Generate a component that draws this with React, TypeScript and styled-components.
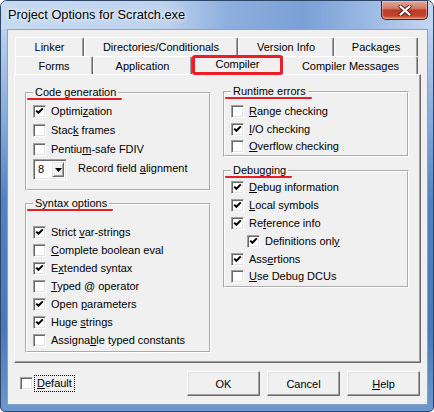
import React from 'react';
import styled, { createGlobalStyle } from 'styled-components';

const GlobalStyle = createGlobalStyle`
   html, body {
      margin: 0;
      padding: 0;
      background: #ffffff;
   }
   body {
      font-family: "Liberation Sans", Arial, sans-serif;
      font-size: 11px;
      color: #000;
   }
`;

const Window = styled.div`
   width: 434px;
   height: 412px;
   box-sizing: border-box;
   border: 1px solid #2f4566;
   border-radius: 7px 7px 5px 5px;
   background: linear-gradient(
      180deg,
      #c9dcf2 0px,
      #b4ccec 40px,
      #86aadc 120px,
      #5282c1 200px,
      #4a79b8 330px,
      #6d98cf 412px
   );
   display: flex;
   flex-direction: column;
   overflow: hidden;
`;

const TitleBar = styled.div`
   height: 28px;
   flex: none;
   display: flex;
   align-items: flex-start;
   justify-content: space-between;
   padding-left: 7px;
   background: linear-gradient(
      90deg,
      #c6daf1 0%,
      #bcd2ee 38%,
      #8fb0de 52%,
      #7aa0d5 70%,
      #9dbbe4 86%,
      #c3d7f0 100%
   );
`;

const Title = styled.span`
   font-size: 12.8px;
   line-height: 28px;
   color: #000;
   text-shadow: 0 0 7px rgba(255, 255, 255, 0.95), 0 0 3px rgba(255, 255, 255, 0.9);
`;

const CloseButton = styled.div`
   width: 47px;
   height: 19px;
   margin-right: 5px;
   box-sizing: border-box;
   border: 1px solid #4e1a14;
   border-top: none;
   border-radius: 0 0 5px 5px;
   background: linear-gradient(180deg, #e3a596 0%, #d07c68 40%, #b93a27 52%, #c2432c 80%, #e07a55 100%);
   box-shadow: inset 0 0 0 1px rgba(255, 220, 210, 0.45);
   display: flex;
   align-items: center;
   justify-content: center;
`;

const Client = styled.div`
   flex: 1;
   margin: 0 5px 6px 6px;
   border: 1px solid #8aa2c2;
   background: #f0f0f0;
   display: flex;
   flex-direction: column;
   padding: 7px 6px 0 6px;
`;

const TabRow = styled.div<{ $h: number }>`
   height: ${(p) => p.$h}px;
   margin-left: 1px;
   display: flex;
   align-items: flex-end;
   position: relative;
`;

const Tab = styled.div<{ $w: number; $active?: boolean }>`
   box-sizing: border-box;
   width: ${(p) => p.$w}px;
   height: ${(p) => (p.$active ? 'calc(100% + 2px)' : '100%')};
   margin-top: ${(p) => (p.$active ? '-2px' : '0')};
   display: flex;
   align-items: center;
   justify-content: center;
   padding-bottom: ${(p) => (p.$active ? '3px' : '0')};
   background: #f0f0f0;
   border-top: 1px solid #ffffff;
   border-left: 1px solid #ffffff;
   border-right: 1px solid #696969;
   box-shadow: inset -1px 0 #a0a0a0;
   border-radius: 2px 2px 0 0;
   position: relative;
   z-index: ${(p) => (p.$active ? 2 : 1)};
   margin-bottom: ${(p) => (p.$active ? '-1px' : '0')};
   ${(p) =>
      p.$active &&
      `
      outline: 3px solid #ee1c24;
      outline-offset: -3px;
      border-radius: 3px;
   `}
`;

const Panel = styled.div`
   height: 289px;
   box-sizing: border-box;
   border-top: 1px solid #ffffff;
   border-left: 1px solid #ffffff;
   border-right: 1px solid #696969;
   border-bottom: 1px solid #696969;
   box-shadow: inset -1px -1px #a0a0a0;
   display: grid;
   grid-template-columns: 186px 186px;
   column-gap: 12px;
   padding-left: 10px;
`;

const Column = styled.div<{ $top: number; $gap: number }>`
   display: flex;
   flex-direction: column;
   padding-top: ${(p) => p.$top}px;
   gap: ${(p) => p.$gap}px;
`;

const Group = styled.fieldset<{ $h: number }>`
   margin: 0;
   padding: 0;
   min-width: 0;
   box-sizing: border-box;
   height: ${(p) => p.$h}px;
   border: 2px groove #ffffff;
`;

const Legend = styled.legend`
   margin-left: 6px;
   padding: 0 2px;
   line-height: 13px;
   position: relative;

   &::after {
      content: '';
      position: absolute;
      left: -6px;
      right: -4px;
      bottom: -1px;
      height: 2px;
      border-radius: 1px;
      background: #ec1c24;
   }
`;

const Rows = styled.div<{ $top: number }>`
   display: flex;
   flex-direction: column;
   padding: ${(p) => p.$top}px 0 0 6px;
`;

const Row = styled.label<{ $h: number; $indent?: number }>`
   display: flex;
   align-items: center;
   height: ${(p) => p.$h}px;
   padding-left: ${(p) => p.$indent ?? 0}px;
   white-space: nowrap;
`;

const Box = styled.span`
   flex: none;
   width: 13px;
   height: 13px;
   box-sizing: border-box;
   background: #ffffff;
   border: 1px solid;
   border-color: #a0a0a0 #ffffff #ffffff #a0a0a0;
   box-shadow: inset 1px 1px #696969, inset -1px -1px #e3e3e3;
   display: flex;
   align-items: center;
   justify-content: center;
`;

const Text = styled.span<{ $focus?: boolean }>`
   margin-left: 5px;
   line-height: 13px;
   ${(p) =>
      p.$focus &&
      `
      margin-left: 3px;
      padding: 0 1px;
      outline: 1px dotted #000;
      outline-offset: 1px;
   `}
`;

const Key = styled.span`
   text-decoration: underline;
   text-underline-offset: 1px;
`;

const ComboRow = styled.div`
   display: flex;
   align-items: flex-start;
   height: 22px;
`;

const Combo = styled.div`
   width: 34px;
   height: 21px;
   box-sizing: border-box;
   background: #ffffff;
   border: 1px solid;
   border-color: #a0a0a0 #ffffff #ffffff #a0a0a0;
   box-shadow: inset 1px 1px #696969, inset -1px -1px #e3e3e3;
   display: flex;
   padding: 2px;
`;

const ComboValue = styled.span`
   flex: 1;
   padding-left: 2px;
   line-height: 15px;
`;

const ComboButton = styled.span`
   width: 12px;
   box-sizing: border-box;
   background: #f0f0f0;
   border: 1px solid;
   border-color: #e3e3e3 #696969 #696969 #e3e3e3;
   box-shadow: inset 1px 1px #fff, inset -1px -1px #a0a0a0;
   display: flex;
   align-items: center;
   justify-content: center;
`;

const ComboLabel = styled.span`
   margin: 3px 0 0 11px;
   line-height: 13px;
   white-space: nowrap;
`;

const BottomBar = styled.div`
   flex: 1;
   display: flex;
   align-items: center;
   padding: 0 1px 0 6px;
`;

const Spacer = styled.div`
   flex: 1;
`;

const Button = styled.div`
   width: 73px;
   height: 25px;
   box-sizing: border-box;
   margin-left: 7px;
   background: #f0f0f0;
   border: 1px solid;
   border-color: #ffffff #696969 #696969 #ffffff;
   box-shadow: inset -1px -1px #a0a0a0, inset 1px 1px #e3e3e3;
   display: flex;
   align-items: center;
   justify-content: center;
`;

const Check = () => (
   <svg width="9" height="9" viewBox="0 0 9 9">
      <path d="M1.2 3.6 L3.4 5.8 L7.8 1.4" fill="none" stroke="#000" strokeWidth="2" />
   </svg>
);

const CheckItem: React.FC<{
   checked?: boolean;
   h: number;
   indent?: number;
   children: React.ReactNode;
}> = ({ checked, h, indent, children }) => (
   <Row $h={h} $indent={indent}>
      <Box>{checked && <Check />}</Box>
      <Text>{children}</Text>
   </Row>
);

const App: React.FC = () => {
   return (
      <>
         <GlobalStyle />
         <Window>
            <TitleBar>
               <Title>Project Options for Scratch.exe</Title>
               <CloseButton>
                  <svg width="14" height="11" viewBox="0 0 14 11">
                     <path
                        d="M2.5 1.5 L11.5 9.5 M11.5 1.5 L2.5 9.5"
                        stroke="#5a1c14"
                        strokeWidth="4"
                        strokeLinecap="round"
                     />
                     <path
                        d="M2.5 1.5 L11.5 9.5 M11.5 1.5 L2.5 9.5"
                        stroke="#ffffff"
                        strokeWidth="2.3"
                        strokeLinecap="round"
                     />
                  </svg>
               </CloseButton>
            </TitleBar>
            <Client>
               <TabRow $h={19}>
                  <Tab $w={69}>Linker</Tab>
                  <Tab $w={154}>Directories/Conditionals</Tab>
                  <Tab $w={96}>Version Info</Tab>
                  <Tab $w={84}>Packages</Tab>
               </TabRow>
               <TabRow $h={18}>
                  <Tab $w={78}>Forms</Tab>
                  <Tab $w={99}>Application</Tab>
                  <Tab $w={91} $active>
                     Compiler
                  </Tab>
                  <Tab $w={135}>Compiler Messages</Tab>
               </TabRow>
               <Panel>
                  <Column $top={11} $gap={6}>
                     <Group $h={105}>
                        <Legend>Code generation</Legend>
                        <Rows $top={3}>
                           <CheckItem h={19} checked>
                              Optimi<Key>z</Key>ation
                           </CheckItem>
                           <CheckItem h={19}>
                              Stac<Key>k</Key> frames
                           </CheckItem>
                           <CheckItem h={19}>
                              Pentiu<Key>m</Key>-safe FDIV
                           </CheckItem>
                           <ComboRow>
                              <Combo>
                                 <ComboValue>8</ComboValue>
                                 <ComboButton>
                                    <svg width="7" height="4" viewBox="0 0 7 4">
                                       <path d="M0 0 H7 L3.5 4 Z" fill="#000" />
                                    </svg>
                                 </ComboButton>
                              </Combo>
                              <ComboLabel>
                                 Record field <Key>a</Key>lignment
                              </ComboLabel>
                           </ComboRow>
                        </Rows>
                     </Group>
                     <Group $h={156}>
                        <Legend>Syntax options</Legend>
                        <Rows $top={13}>
                           <CheckItem h={18} checked>
                              Strict <Key>v</Key>ar-strings
                           </CheckItem>
                           <CheckItem h={18}>
                              <Key>C</Key>omplete boolean eval
                           </CheckItem>
                           <CheckItem h={18} checked>
                              E<Key>x</Key>tended syntax
                           </CheckItem>
                           <CheckItem h={18}>
                              <Key>T</Key>yped @ operator
                           </CheckItem>
                           <CheckItem h={18} checked>
                              Open <Key>p</Key>arameters
                           </CheckItem>
                           <CheckItem h={18} checked>
                              Huge <Key>s</Key>trings
                           </CheckItem>
                           <CheckItem h={18}>
                              Assigna<Key>b</Key>le typed constants
                           </CheckItem>
                        </Rows>
                     </Group>
                  </Column>
                  <Column $top={10} $gap={7}>
                     <Group $h={72}>
                        <Legend>Runtime errors</Legend>
                        <Rows $top={5}>
                           <CheckItem h={17.5}>
                              <Key>R</Key>ange checking
                           </CheckItem>
                           <CheckItem h={17.5} checked>
                              <Key>I</Key>/O checking
                           </CheckItem>
                           <CheckItem h={17.5}>
                              <Key>O</Key>verflow checking
                           </CheckItem>
                        </Rows>
                     </Group>
                     <Group $h={124}>
                        <Legend>Debugging</Legend>
                        <Rows $top={1}>
                           <CheckItem h={18} checked>
                              <Key>D</Key>ebug information
                           </CheckItem>
                           <CheckItem h={18} checked>
                              <Key>L</Key>ocal symbols
                           </CheckItem>
                           <CheckItem h={18} checked>
                              Re<Key>f</Key>erence info
                           </CheckItem>
                           <CheckItem h={18} indent={16} checked>
                              Definitions onl<Key>y</Key>
                           </CheckItem>
                           <CheckItem h={18} checked>
                              Ass<Key>e</Key>rtions
                           </CheckItem>
                           <CheckItem h={16}>
                              <Key>U</Key>se Debug DCUs
                           </CheckItem>
                        </Rows>
                     </Group>
                  </Column>
               </Panel>
               <BottomBar>
                  <Row $h={15}>
                     <Box />
                     <Text $focus>
                        <Key>D</Key>efault
                     </Text>
                  </Row>
                  <Spacer />
                  <Button>OK</Button>
                  <Button>Cancel</Button>
                  <Button>
                     <Key>H</Key>elp
                  </Button>
               </BottomBar>
            </Client>
         </Window>
      </>
   );
};

export default App;
